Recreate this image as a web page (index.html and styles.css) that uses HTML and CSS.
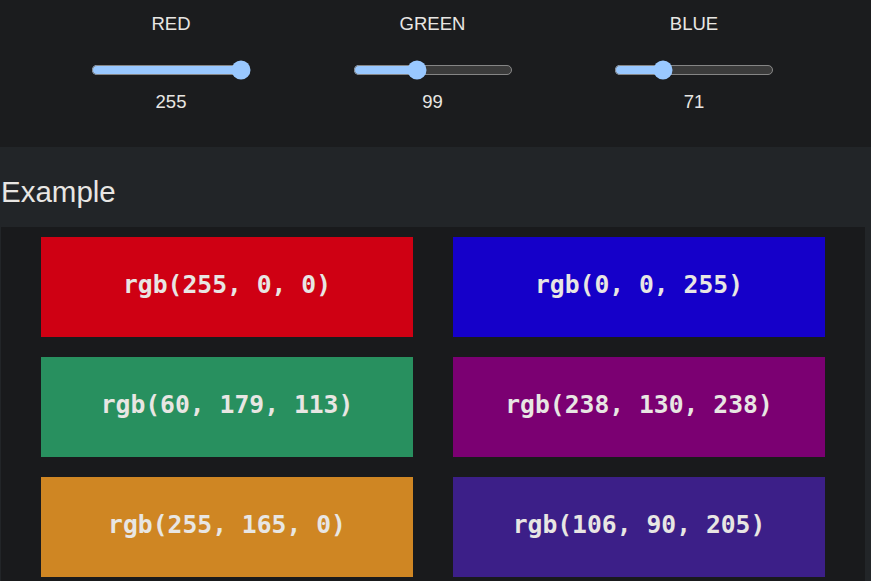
FILE: index.html
```html
<!DOCTYPE html>
<html>
<head>
<meta charset="utf-8">
<link rel="stylesheet" href="styles.css">
</head>
<body>
<div class="controls">
  <div class="control">
    <div class="label">RED</div>
    <input class="slider" type="range" min="0" max="255" value="255">
    <div class="value">255</div>
  </div>
  <div class="control">
    <div class="label">GREEN</div>
    <input class="slider" type="range" min="0" max="255" value="99">
    <div class="value">99</div>
  </div>
  <div class="control">
    <div class="label">BLUE</div>
    <input class="slider" type="range" min="0" max="255" value="71">
    <div class="value">71</div>
  </div>
</div>
<div class="example">
  <h2 class="title">Example</h2>
  <div class="grid">
    <div class="box red">rgb(255, 0, 0)</div>
    <div class="box blue">rgb(0, 0, 255)</div>
    <div class="box green">rgb(60, 179, 113)</div>
    <div class="box violet">rgb(238, 130, 238)</div>
    <div class="box orange">rgb(255, 165, 0)</div>
    <div class="box slate">rgb(106, 90, 205)</div>
  </div>
</div>
</body>
</html>
```
FILE: styles.css
```css
html, body {
  margin: 0;
  padding: 0;
  background: #1b1c1e;
  color-scheme: dark;
  font-family: "Liberation Sans", Arial, sans-serif;
  color: #e8e6e3;
}
.controls {
  height: 147px;
  width: 865px;
  display: flex;
  justify-content: space-evenly;
  background: #1b1c1e;
}
.control {
  width: 181px;
  display: flex;
  flex-direction: column;
  align-items: center;
  font-size: 18.5px;
}
.label {
  margin-top: 13px;
  line-height: 22px;
}
.slider {
  width: 128px;
  zoom: 1.25;
  margin: 20px 0 0 0;
  accent-color: #99c8ff;
  color-scheme: dark;
}
.value {
  margin-top: 11px;
  line-height: 22px;
}
.example {
  background: #222528;
  padding: 0 6px 0 1px;
}
.title {
  margin: 0;
  height: 80px;
  display: flex;
  align-items: center;
  font-weight: normal;
  font-size: 29.5px;
  color: #e8e6e3;
  padding-top: 10px;
  box-sizing: border-box;
}
.grid {
  background: #191a1c;
  display: grid;
  grid-template-columns: 372px 372px;
  column-gap: 40px;
  row-gap: 20px;
  padding: 10px 40px 20px 40px;
}
.box {
  height: 100px;
  box-sizing: border-box;
  padding-bottom: 5px;
  display: flex;
  align-items: center;
  justify-content: center;
  font-family: "DejaVu Sans Mono", "Liberation Mono", monospace;
  font-weight: bold;
  font-size: 24.7px;
  color: #e8e6e3;
}
.red { background: #cf0013; }
.blue { background: #1500c9; }
.green { background: #28905f; }
.violet { background: #7b0072; }
.orange { background: #cf8623; }
.slate { background: #3c1f88; }
```
